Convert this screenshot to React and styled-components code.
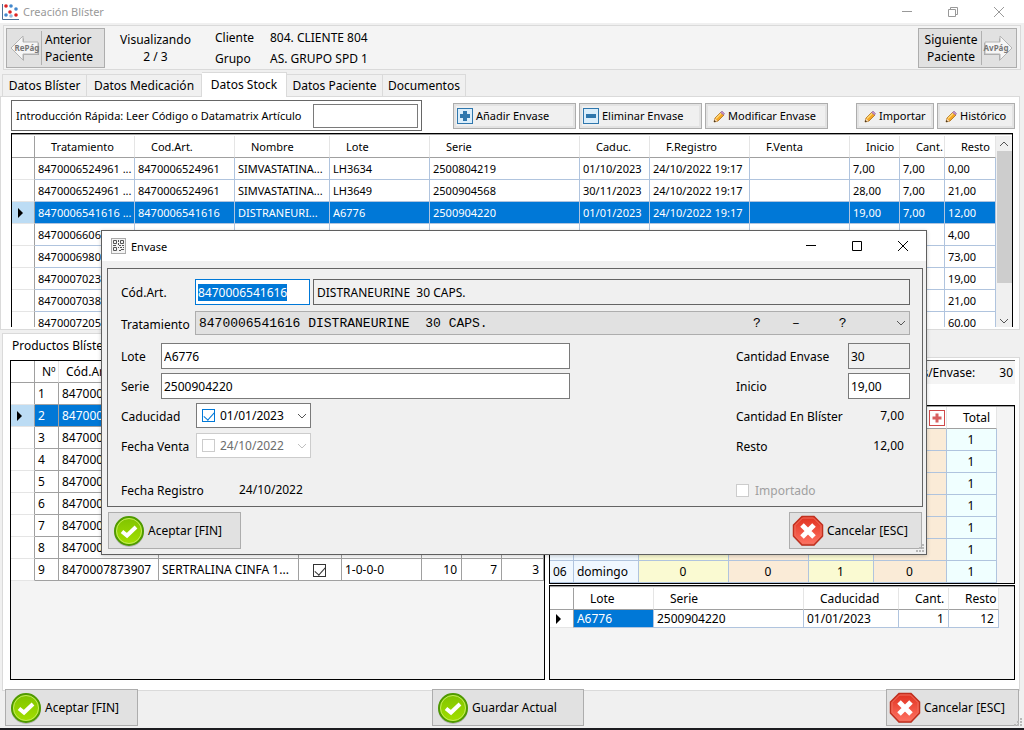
import React, { useEffect, useRef } from "react";
import styled, { createGlobalStyle, css } from "styled-components";

const stockCols = [23, 100, 100, 95, 100, 150, 70, 100, 100, 50, 45, 51];
const stockHead = [
	"Tratamiento",
	"Cod.Art.",
	"Nombre",
	"Lote",
	"Serie",
	"Caduc.",
	"F.Registro",
	"F.Venta",
	"Inicio",
	"Cant.",
	"Resto",
];
const registro = "24/10/2022 19:17";
const stock = [
	["8470006524961 ...", "8470006524961", "SIMVASTATINA...", "LH3634", "2500804219", "01/10/2023", registro, "", "7,00", "7,00", "0,00"],
	["8470006524961 ...", "8470006524961", "SIMVASTATINA...", "LH3649", "2500904568", "30/11/2023", registro, "", "28,00", "7,00", "21,00"],
	["8470006541616 ...", "8470006541616", "DISTRANEURI...", "A6776", "2500904220", "01/01/2023", registro, "", "19,00", "7,00", "12,00"],
	["8470006606010 ...", "8470006606010", "SINTROM 4 M...", "T0681", "2501090441", "01/05/2024", registro, "", "11,00", "7,00", "4,00"],
	["8470006980910 ...", "8470006980910", "", "", "", "", registro, "", "80,00", "7,00", "73,00"],
	["8470007023520 ...", "8470007023520", "", "", "", "", registro, "", "26,00", "7,00", "19,00"],
	["8470007038610 ...", "8470007038610", "", "", "", "", registro, "", "28,00", "7,00", "21,00"],
	["8470007205810 ...", "8470007205810", "", "", "", "", registro, "", "67,00", "7,00", "60,00"],
];

const productCols = [24, 24, 100, 140, 43, 80, 40, 40, 42];
const products = [
	["8470006524961", "SIMVASTATINA 2..."],
	["8470006541616", "DISTRANEURINE ..."],
	["8470006606010", "SINTROM 4 MG 2..."],
	["8470006980910", ""],
	["8470007023520", ""],
	["8470007038610", ""],
	["8470007205810", ""],
	["8470007654410", ""],
	["8470007873907", "SERTRALINA CINFA 1..."],
];

const dayCols = [24, 65, 90, 80, 65, 73, 50];
const days = [
	["31", "lunes"],
	["01", "martes"],
	["02", "miércoles"],
	["03", "jueves"],
	["04", "viernes"],
	["05", "sábado"],
	["06", "domingo"],
];

const lotCols = [24, 80, 150, 95, 50, 50];

const treatment = ("8470006541616 DISTRANEURINE  30 CAPS.".padEnd(71) + "?    –     ?").replace(/ /g, "\u00a0");

function Cols({ widths }) {
	return (
		<colgroup>
			{widths.map((w, i) => (
				<col key={i} style={{ width: w }} />
			))}
		</colgroup>
	);
}

function AcceptIcon() {
	return (
		<svg width="32" height="32" viewBox="0 0 32 32" aria-hidden="true">
			<defs>
				<linearGradient id="green" x1="0" y1="0" x2="0" y2="1">
					<stop offset="0" stopColor="#7fc300" />
					<stop offset="1" stopColor="#a3e000" />
				</linearGradient>
			</defs>
			<circle cx="16" cy="17" r="15" fill="#b9b9b9" />
			<circle cx="16" cy="16" r="14" fill="url(#green)" stroke="#4f9a00" strokeWidth="2" />
			<circle cx="16" cy="16" r="12.500" fill="none" stroke="#c4ec5c" strokeWidth="1" />
			<path d="M9 16.500 L14 20.500 L23 12" fill="none" stroke="#fff" strokeWidth="4" />
		</svg>
	);
}

function CancelIcon() {
	return (
		<svg width="32" height="32" viewBox="0 0 32 32" aria-hidden="true">
			<defs>
				<linearGradient id="red" x1="0" y1="0" x2="0" y2="1">
					<stop offset="0" stopColor="#e0301e" />
					<stop offset="1" stopColor="#ff7363" />
				</linearGradient>
			</defs>
			<path d="M10 2 H22 L31 11 V22 L22 31 H10 L1 22 V11 Z" fill="#b9b9b9" />
			<path d="M10 1.500 H22 L30.500 10 V21 L22 30 H10 L1.500 21 V10 Z" fill="url(#red)" stroke="#c0301f" strokeWidth="1.500" />
			<path d="M10.500 3 H21.500 L29 10.500 V20.500 L21.500 28.500 H10.500 L3 20.500 V10.500 Z" fill="none" stroke="#f0705f" strokeWidth="1" />
			<path d="M10 10 L22 22 M22 10 L10 22" fill="none" stroke="#fff" strokeWidth="5" />
		</svg>
	);
}

function PageArrow({ next }) {
	return (
		<svg width="30" height="28" viewBox="0 0 30 28" aria-hidden="true">
			<g transform={next ? "translate(30 0) scale(-1 1)" : undefined}>
				<path d="M2 15 L14 4 V9 H29 V21 H14 V27 Z" fill="#a8a8a8" />
				<path d="M1 14 L13 2 V8 H28 V20 H13 V26 Z" fill="#f6f6f6" stroke="#b4b4b4" />
			</g>
			<text x={next ? 13 : 17} y="17" textAnchor="middle" fontSize="8" fontWeight="700" fill="#777">
				{next ? "AvPág" : "RePág"}
			</text>
		</svg>
	);
}

function PencilIcon() {
	return (
		<svg width="12" height="14" viewBox="0 0 12 14" aria-hidden="true">
			<path d="M1 13 L2 9 L8 3 L11 6 L5 12 Z" fill="#f5a623" stroke="#a86a1a" strokeWidth="0.800" />
			<path d="M2.500 9 L8 3.500 L9 4.500 L3.500 10 Z" fill="#ffd977" />
			<path d="M7.500 3.500 L9 2 L11.500 4.500 L10.500 6 Z" fill="#c98fc8" stroke="#8d6a9a" strokeWidth="0.600" />
			<path d="M1 13 L1.500 11 L3 12.500 Z" fill="#222" />
			<path d="M1.500 11 L2 9.500 L4.500 12 L3 12.500 Z" fill="#f4d9b8" />
		</svg>
	);
}

function SignIcon({ minus }) {
	return (
		<svg width="16" height="16" viewBox="0 0 16 16" aria-hidden="true">
			<rect x="0.500" y="0.500" width="15" height="15" fill="#dbeefb" stroke="#2f77ad" />
			<rect x="3" y="6" width="10" height="4" fill="#2f77ad" />
			{!minus && <rect x="6" y="3" width="4" height="10" fill="#2f77ad" />}
		</svg>
	);
}

function AppIcon() {
	const dots = [
		[3, 2, "#d22"],
		[8, 2, "#48c"],
		[13, 5, "#48c"],
		[7, 8, "#d22"],
		[13, 11, "#d22"],
		[3, 11, "#48c"],
		[8, 12, "#9bd"],
	];
	return (
		<svg width="17" height="16" viewBox="0 0 17 16" aria-hidden="true">
			<path d="M0.500 0 V15.500 H17" fill="none" stroke="#4a6f94" />
			{dots.map(([x, y, fill]) => (
				<circle key={x + "-" + y} cx={x + 1} cy={y} r="1.800" fill={fill} />
			))}
		</svg>
	);
}

function CodeIcon() {
	return (
		<svg width="15" height="16" viewBox="0 0 15 16" aria-hidden="true">
			<rect x="0.500" y="0.500" width="14" height="15" fill="#f4f4f4" stroke="#aaa" />
			<g fill="none" stroke="#555">
				<path d="M2.500 2.500 h3 v3 h-3 z M9.500 2.500 h3 v3 h-3 z M2.500 9.500 h3 v3 h-3 z" />
				<path d="M7.500 2 v2 M7.500 5 v2 M2 7.500 h3 M8 7.500 h2 M11 7.500 h2 M7.500 9 v1 M9 9.500 h2 M10 11.500 h3 M8 12.500 h2 M12.500 9 v1" />
			</g>
		</svg>
	);
}

function Grip() {
	return (
		<GripMark width="9" height="9" viewBox="0 0 9 9" aria-hidden="true">
			<path d="M6 0h2v2h-2z M3 3h2v2h-2z M6 3h2v2h-2z M0 6h2v2h-2z M3 6h2v2h-2z M6 6h2v2h-2z" fill="#b8b8b8" />
		</GripMark>
	);
}

function Glyph({ kind }) {
	const paths = {
		min: "M1 5.500 H11",
		max: "M1.500 1.500 H10.500 V10.500 H1.500 Z",
		restore: "M1.500 3.500 H8.500 V10.500 H1.500 Z M3.500 3.500 V1.500 H10.500 V8.500 H8.500",
		close: "M1 1 L11 11 M11 1 L1 11",
		down: "M2 4 L6 8 L10 4",
		up: "M2 8 L6 4 L10 8",
	};
	return (
		<svg width="12" height="12" viewBox="0 0 12 12" aria-hidden="true">
			<path d={paths[kind]} fill="none" stroke="currentColor" />
		</svg>
	);
}

function WindowControls({ middle }) {
	return (
		<Controls>
			<ControlButton aria-label="Minimizar"><Glyph kind="min" /></ControlButton>
			<ControlButton aria-label="Maximizar"><Glyph kind={middle} /></ControlButton>
			<ControlButton aria-label="Cerrar"><Glyph kind="close" /></ControlButton>
		</Controls>
	);
}

function StockGrid() {
	return (
		<StockFrame>
			<Grid>
				<Cols widths={stockCols} />
				<thead>
					<tr>
						<HeadCell />
						{stockHead.map(h => <HeadCell key={h}>{h}</HeadCell>)}
					</tr>
				</thead>
				<tbody>
					{stock.map((row, r) => (
						<tr key={r}>
							<MarkCell $on={r === 2}>{r === 2 && <Marker />}</MarkCell>
							{row.map((value, c) => (
								<Cell key={c} $on={r === 2}>{value}</Cell>
							))}
						</tr>
					))}
				</tbody>
			</Grid>
			<ScrollBar>
				<Glyph kind="up" />
				<Thumb />
				<Glyph kind="down" />
			</ScrollBar>
		</StockFrame>
	);
}

function ProductGrid() {
	return (
		<ProductFrame>
			<Grid $big>
				<Cols widths={productCols} />
				<thead>
					<tr>
						<HeadCell />
						{["Nº", "Cód.Art.", "Nombre", "", "Pauta", "", "", ""].map((h, i) => (
							<HeadCell key={i} $tight>{h}</HeadCell>
						))}
					</tr>
				</thead>
				<tbody>
					{products.map(([code, name], r) => (
						<tr key={r}>
							<MarkCell $on={r === 1}>{r === 1 && <Marker />}</MarkCell>
							<Cell $dark $on={r === 1}>{r + 1}</Cell>
							<Cell $dark $on={r === 1}>{code}</Cell>
							<Cell $dark $on={r === 1}>{name}</Cell>
							<Cell $dark $on={r === 1} $align="center">
								<Check type="checkbox" aria-label={"Producto " + (r + 1)} defaultChecked />
							</Cell>
							<Cell $dark $on={r === 1}>1-0-0-0</Cell>
							<Cell $dark $on={r === 1} $align="right">10</Cell>
							<Cell $dark $on={r === 1} $align="right">7</Cell>
							<Cell $dark $on={r === 1} $align="right">3</Cell>
						</tr>
					))}
				</tbody>
			</Grid>
		</ProductFrame>
	);
}

function DayGrid() {
	return (
		<DayFrame>
			<Grid $big>
				<Cols widths={dayCols} />
				<thead>
					<tr>
						<HeadCell />
						<HeadCell />
						<HeadCell />
						<HeadCell />
						<HeadCell />
						<HeadCell $align="right">
							<svg width="16" height="16" viewBox="0 0 16 16" aria-hidden="true">
								<rect x="0.500" y="0.500" width="15" height="15" fill="#fff" stroke="#d04a4a" />
								<path d="M8 3.500 V12.500 M3.500 8 H12.500" stroke="#d86060" strokeWidth="3" />
							</svg>
						</HeadCell>
						<HeadCell>Total</HeadCell>
					</tr>
				</thead>
				<tbody>
					{days.map(([num, name]) => (
						<tr key={num}>
							<Cell $tone="#f0f8ff">{num}</Cell>
							<Cell $tone="#f0f8ff">{name}</Cell>
							<Cell $tone="#fafad2" $align="center">0</Cell>
							<Cell $tone="#faebd7" $align="center">0</Cell>
							<Cell $tone="#fafad2" $align="center">1</Cell>
							<Cell $tone="#faebd7" $align="center">0</Cell>
							<Cell $tone="#f0ffff" $align="center">1</Cell>
						</tr>
					))}
				</tbody>
			</Grid>
		</DayFrame>
	);
}

function LotGrid() {
	return (
		<LotFrame>
			<Grid $big>
				<Cols widths={lotCols} />
				<thead>
					<tr>
						<HeadCell />
						{["Lote", "Serie", "Caducidad", "Cant.", "Resto"].map(h => <HeadCell key={h}>{h}</HeadCell>)}
					</tr>
				</thead>
				<tbody>
					<tr>
						<MarkCell $short><Marker /></MarkCell>
						<Cell $short $on>A6776</Cell>
						<Cell $short>2500904220</Cell>
						<Cell $short>01/01/2023</Cell>
						<Cell $short $align="right">1</Cell>
						<Cell $short $align="right">12</Cell>
					</tr>
				</tbody>
			</Grid>
		</LotFrame>
	);
}

function EnvaseDialog() {
	const codeRef = useRef(null);

	useEffect(() => {
		codeRef.current.focus();
		codeRef.current.select();
	}, []);

	return (
		<Dialog role="dialog" aria-labelledby="envase-title">
			<DialogTitle>
				<CodeIcon />
				<span id="envase-title">Envase</span>
				<WindowControls middle="max" />
			</DialogTitle>
			<Form>
				<FormRow $height={32}>
					<Label htmlFor="codigo" $width={74}>Cód.Art.</Label>
					<TextBox id="codigo" ref={codeRef} $width={115} $active defaultValue="8470006541616" />
					<ReadOnly aria-label="Artículo" readOnly value="DISTRANEURINE  30 CAPS." />
				</FormRow>
				<FormRow $height={32}>
					<Label htmlFor="tratamiento" $width={74}>Tratamiento</Label>
					<SelectWrap>
						<Select id="tratamiento" disabled>
							<option>{treatment}</option>
						</Select>
						<Glyph kind="down" />
					</SelectWrap>
				</FormRow>
				<Columns>
					<Left>
						<FormRow>
							<Label htmlFor="lote" $width={40}>Lote</Label>
							<TextBox id="lote" defaultValue="A6776" />
						</FormRow>
						<FormRow>
							<Label htmlFor="serie" $width={40}>Serie</Label>
							<TextBox id="serie" defaultValue="2500904220" />
						</FormRow>
						<FormRow>
							<Label htmlFor="caducidad" $width={75}>Caducidad</Label>
							<DateBox>
								<Check type="checkbox" $blue aria-label="Usar caducidad" defaultChecked />
								<input id="caducidad" defaultValue="01/01/2023" />
								<button aria-label="Abrir calendario"><Glyph kind="down" /></button>
							</DateBox>
						</FormRow>
						<FormRow $height={44}>
							<Label htmlFor="venta" $width={75}>Fecha Venta</Label>
							<DateBox $off>
								<Check type="checkbox" $off aria-label="Usar fecha de venta" disabled />
								<input id="venta" defaultValue="24/10/2022" disabled />
								<button aria-label="Abrir calendario" disabled><Glyph kind="down" /></button>
							</DateBox>
						</FormRow>
						<FormRow>
							<Label as="span" $width={118}>Fecha Registro</Label>
							<Value>24/10/2022</Value>
						</FormRow>
					</Left>
					<Right>
						<FormRow>
							<Label htmlFor="cantidad" $width={112}>Cantidad Envase</Label>
							<TextBox id="cantidad" readOnly $grey value="30" />
						</FormRow>
						<FormRow>
							<Label htmlFor="inicio" $width={112}>Inicio</Label>
							<TextBox id="inicio" defaultValue="19,00" />
						</FormRow>
						<FormRow>
							<Label as="span">Cantidad En Blíster</Label>
							<Value $end>7,00</Value>
						</FormRow>
						<FormRow $height={44}>
							<Label as="span">Resto</Label>
							<Value $end>12,00</Value>
						</FormRow>
						<CheckLabel>
							<Check type="checkbox" $off disabled />
							Importado
						</CheckLabel>
					</Right>
				</Columns>
			</Form>
			<DialogFooter>
				<ActionButton><AcceptIcon />Aceptar [FIN]</ActionButton>
				<ActionButton $cancel><CancelIcon />Cancelar [ESC]</ActionButton>
			</DialogFooter>
			<Grip />
		</Dialog>
	);
}

export default function App() {
	return (
		<Window>
			<GlobalStyle />
			<TitleBar>
				<AppIcon />
				<span>Creación Blíster</span>
				<WindowControls middle="restore" />
			</TitleBar>

			<PatientBar>
				<PageButton>
					<PageArrow />
					<span>Anterior<br />Paciente</span>
				</PageButton>
				<Viewing>Visualizando<br />2 / 3</Viewing>
				<Client>
					<dt>Cliente</dt>
					<dd>804. CLIENTE 804</dd>
					<dt>Grupo</dt>
					<dd>AS. GRUPO SPD 1</dd>
				</Client>
				<PageButton $next>
					<span>Siguiente<br />Paciente</span>
					<PageArrow next />
				</PageButton>
			</PatientBar>

			<Tabs role="tablist">
				<Tab role="tab" $width={85}>Datos Blíster</Tab>
				<Tab role="tab" $width={115}>Datos Medicación</Tab>
				<Tab role="tab" $width={85} $active aria-selected="true">Datos Stock</Tab>
				<Tab role="tab" $width={96}>Datos Paciente</Tab>
				<Tab role="tab" $width={83}>Documentos</Tab>
			</Tabs>
			<StockPage>
				<Toolbar>
					<QuickEntry>
						<label htmlFor="rapida">Introducción Rápida: Leer Código o Datamatrix Artículo</label>
						<input id="rapida" />
					</QuickEntry>
					<ToolButton><SignIcon />Añadir Envase</ToolButton>
					<ToolButton><SignIcon minus />Eliminar Envase</ToolButton>
					<ToolButton $pencil><PencilIcon />Modificar Envase</ToolButton>
					<ToolButton $pencil $small $push><PencilIcon />Importar</ToolButton>
					<ToolButton $pencil $small><PencilIcon />Histórico</ToolButton>
				</Toolbar>
				<StockGrid />
			</StockPage>

			<LowerTabs role="tablist">
				<Tab role="tab" $width={116} $active aria-selected="true">Productos Blíster</Tab>
			</LowerTabs>
			<LowerPage>
				<ProductGrid />
				<RightColumn>
					<Summary>
						<span>Unidades/Envase:</span>
						<span>30</span>
					</Summary>
					<DayGrid />
					<LotGrid />
				</RightColumn>
			</LowerPage>

			<Footer>
				<ActionButton><AcceptIcon />Aceptar [FIN]</ActionButton>
				<ActionButton $wide><AcceptIcon />Guardar Actual</ActionButton>
				<ActionButton $cancel><CancelIcon />Cancelar [ESC]</ActionButton>
			</Footer>
			<Grip />

			<EnvaseDialog />
		</Window>
	);
}

const GlobalStyle = createGlobalStyle`
	* {
		box-sizing: border-box;
	}
	body {
		margin: 0;
		background: #f0f0f0;
	}
	body, button, input, select {
		font-family: "Noto Sans", "Open Sans", sans-serif;
		font-size: 12px;
		color: #000;
	}
	::selection {
		background: #0078d7;
		color: #fff;
	}
`;

const Window = styled.main`
	position: relative;
	display: flex;
	flex-direction: column;
	min-height: 100vh;
	overflow: hidden;
	background: #f0f0f0;
	border-bottom: 2px solid #1c1c20;
`;

const GripMark = styled.svg`
	position: absolute;
	right: 1px;
	bottom: 1px;
`;

// TITLE BARS
const TitleBar = styled.header`
	display: flex;
	align-items: center;
	gap: 4px;
	height: 23px;
	padding: 0 2px;
	background: #fff;
	color: #999;
	font-size: 11px;
`;

const Controls = styled.div`
	display: flex;
	margin-left: auto;
	align-self: stretch;
`;

const ControlButton = styled.button`
	display: flex;
	align-items: center;
	justify-content: center;
	width: 46px;
	padding: 0;
	border: 0;
	background: none;
	color: inherit;
`;

// PATIENT BAR
const PatientBar = styled.section`
	display: flex;
	align-items: center;
	height: 45px;
	margin: 2px 3px 2px;
	padding: 0 3px 0 2px;
	border: 1px solid #dadada;
	background: #f4f4f4;
`;

const PageButton = styled.button`
	display: flex;
	align-items: center;
	justify-content: space-between;
	width: 99px;
	height: 40px;
	padding: 0 3px;
	border: 1px solid #adadad;
	background: #e1e1e1;
	margin-left: ${p => (p.$next ? "auto" : "0")};
	line-height: 17px;

	span {
		flex: 1;
		padding: ${p => (p.$next ? "0 2px 0 0" : "0 0 0 3px")};
		margin: 0 1px;
		text-align: ${p => (p.$next ? "center" : "left")};
		border: 0 solid #b0b0b0;
		border-width: ${p => (p.$next ? "0 1px 0 0" : "0 0 0 1px")};
	}
`;

const Viewing = styled.p`
	width: 101px;
	margin: 0;
	text-align: center;
	line-height: 17px;
`;

const Client = styled.dl`
	display: grid;
	grid-template-columns: 55px auto;
	margin: 0 0 0 9px;
	line-height: 21px;

	dd {
		margin: 0;
	}
`;

// TABS
const Tabs = styled.nav`
	display: flex;
	align-items: flex-end;
	height: 24px;
	padding-left: 2px;
`;

const LowerTabs = styled(Tabs)`
	margin-top: 3px;
`;

const Tab = styled.button`
	width: ${p => p.$width}px;
	height: 22px;
	padding: 0;
	border: 1px solid #dadada;
	border-left-width: 0;
	border-bottom: 0;
	background: #f0f0f0;
	white-space: nowrap;

	&:first-child {
		border-left-width: 1px;
	}
	${p =>
		p.$active &&
		css`
			z-index: 1;
			height: 25px;
			margin-bottom: -1px;
			padding-bottom: 2px;
			background: #fff;
		`}
`;

const StockPage = styled.section`
	margin-right: 4px;
	padding: 3px 4px 2px 10px;
	border: 1px solid #dadada;
	background: #fff;
`;

const Toolbar = styled.div`
	display: flex;
	align-items: center;
	gap: 3px;
	height: 31px;
	margin-bottom: 2px;
`;

const QuickEntry = styled.div`
	display: flex;
	align-items: center;
	justify-content: space-between;
	width: 411px;
	height: 31px;
	margin-right: 28px;
	padding: 0 3px 0 4px;
	border: 1px solid #666;
	white-space: nowrap;
	font-size: 11px;

	input {
		width: 105px;
		height: 24px;
		border: 1px solid #7a7a7a;
	}
`;

const ToolButton = styled.button`
	display: flex;
	align-items: center;
	gap: 3px;
	width: ${p => (p.$small ? 78 : 123)}px;
	height: 26px;
	padding: 0 0 0 ${p => (p.$pencil ? 7 : 3)}px;
	margin-left: ${p => (p.$push ? "auto" : "0")};
	border: 1px solid #adadad;
	box-shadow: inset 0 0 0 2px #e3e3e3;
	background: #f0f0f0;
	white-space: nowrap;
	font-size: 11px;
`;

// DATA GRIDS
const Frame = styled.div`
	border: 1px solid #000;
	background: #f4f4f4;
	box-shadow: inset 0 1px #a0a0a0;
	overflow: hidden;
`;

const StockFrame = styled(Frame)`
	display: flex;
	justify-content: space-between;
	height: 194px;
	margin-right: 2px;
	padding-top: 2px;
	border-bottom: 0;
	background: #fff;
`;

const ProductFrame = styled(Frame)`
	flex: 534 1 0;
`;

const DayFrame = styled(Frame)`
	height: 179px;
	margin-bottom: 1px;
	padding-top: 1px;
`;

const LotFrame = styled(Frame)`
	flex: 1;
	padding-top: 2px;
`;

const Grid = styled.table`
	width: 1px;
	table-layout: fixed;
	border-collapse: separate;
	border-spacing: 0;
	background: #fff;
	font-size: ${p => (p.$big ? 12 : 11)}px;
`;

const HeadCell = styled.th`
	height: 22px;
	padding: ${p => (p.$align ? "0 1px" : p.$tight ? "0 0 0 7px" : "0 0 0 16px")};
	border-right: 1px solid #e5e5e5;
	border-bottom: 1px solid #a0a0a0;
	background: #fff;
	font-weight: 400;
	text-align: ${p => p.$align || "left"};
	white-space: nowrap;
	overflow: hidden;

	&:first-child {
		border-right-color: #a0a0a0;
	}
	svg {
		display: block;
		margin-left: auto;
	}
`;

const Cell = styled.td`
	height: ${p => (p.$short ? 18 : 22)}px;
	padding: 0 4px 0 3px;
	border-right: 1px solid ${p => (p.$dark ? "#a0a0a0" : "#b0c4de")};
	border-bottom: 1px solid ${p => (p.$dark ? "#a0a0a0" : "#b0c4de")};
	background: ${p => (p.$on ? "#0078d7" : p.$tone || "#fff")};
	color: ${p => (p.$on ? "#fff" : "#000")};
	text-align: ${p => p.$align || "left"};
	white-space: nowrap;
	overflow: hidden;
`;

const MarkCell = styled.td`
	height: ${p => (p.$short ? 18 : 22)}px;
	padding: 0 0 0 6px;
	border-right: 1px solid #a0a0a0;
	border-bottom: 1px solid #e5e5e5;
	background: ${p => (p.$on ? "#bcdcf4" : "#fff")};
`;

const Marker = styled.span`
	display: block;
	border: 5px solid transparent;
	border-left-color: #000;
	border-right-width: 0;
	width: 0;
`;

const ScrollBar = styled.div`
	display: flex;
	flex-direction: column;
	align-items: center;
	width: 16px;
	padding-top: 2px;
	background: #f0f0f0;
	color: #555;

	svg:last-child {
		margin-top: auto;
	}
`;

const Thumb = styled.div`
	width: 15px;
	height: 132px;
	margin-top: 1px;
	background: #cdcdcd;
`;

const LowerPage = styled.section`
	display: flex;
	flex: 1;
	gap: 4px;
	margin: 0 4px 0 2px;
	padding: 2px 4px 10px 7px;
	border: 1px solid #dadada;
	background: #fff;
`;

const RightColumn = styled.div`
	display: flex;
	flex: 467 1 0;
	flex-direction: column;
`;

const Summary = styled.div`
	display: flex;
	justify-content: flex-end;
	gap: 24px;
	height: 24px;
	margin-bottom: 21px;
	padding-right: 2px;
	border-top: 1px solid #666;
	background: #f4f4f4;
	line-height: 24px;
`;

// FOOTER
const Footer = styled.footer`
	display: flex;
	justify-content: space-between;
	margin-top: -2px;
	padding: 0 5px 2px;
`;

const ActionButton = styled.button`
	display: flex;
	align-items: center;
	gap: 3px;
	width: ${p => (p.$wide ? 152 : 133)}px;
	height: 37px;
	margin-right: ${p => (p.$wide ? 8 : 0)}px;
	padding: 0 ${p => (p.$cancel ? 2 : 4)}px;
	border: 1px solid #adadad;
	background: #e1e1e1;
	white-space: nowrap;

	svg {
		flex: none;
	}
`;

// ENVASE DIALOG
const Dialog = styled.section`
	position: absolute;
	z-index: 2;
	top: 230px;
	left: 101px;
	right: 97px;
	border: 1px solid #5f5f5f;
	background: #f0f0f0;
	box-shadow: 0 1px 4px rgba(0, 0, 0, 0.2);
`;

const DialogTitle = styled.header`
	display: flex;
	align-items: center;
	gap: 5px;
	height: 30px;
	padding-left: 9px;
	background: #fff;
	font-size: 11px;
`;

const Form = styled.div`
	height: 239px;
	margin: 7px 3px 5px 5px;
	padding: 10px 12px 0 13px;
	border: 1px solid #646464;
`;

const FormRow = styled.div`
	display: flex;
	align-items: flex-start;
	height: ${p => p.$height || 30}px;
`;

const Label = styled.label`
	flex: none;
	width: ${p => (p.$width ? p.$width + "px" : "auto")};
	line-height: 28px;
	white-space: nowrap;
`;

const TextBox = styled.input`
	flex: ${p => (p.$width ? "none" : "1")};
	width: ${p => (p.$width ? p.$width + "px" : "0")};
	height: 26px;
	padding: 0 2px;
	border: 1px solid ${p => (p.$active ? "#0078d7" : "#7a7a7a")};
	background: ${p => (p.$grey ? "#f0f0f0" : "#fff")};
	outline: 0;
`;

const ReadOnly = styled.input`
	flex: 1;
	height: 26px;
	margin-left: 3px;
	padding: 0 3px;
	border: 1px solid #646464;
	background: #f0f0f0;
	white-space: pre;
`;

const SelectWrap = styled.div`
	display: flex;
	flex: 1;
	align-items: center;
	height: 24px;
	padding-right: 2px;
	border: 1px solid #adadad;
	background: #e1e1e1;
	color: #555;
`;

const Select = styled.select`
	flex: 1;
	appearance: none;
	padding: 0 3px;
	border: 0;
	background: none;
	font-family: "Liberation Mono", monospace;
	font-size: 13px;
	color: #000;
	opacity: 1;
`;

const Columns = styled.div`
	display: flex;
	justify-content: space-between;
`;

const Left = styled.div`
	flex: 0 1 449px;
`;

const Right = styled.div`
	flex: 0 0 174px;
`;

const DateBox = styled.div`
	display: flex;
	align-items: center;
	width: 115px;
	height: 25px;
	padding: 0 2px 0 5px;
	border: 1px solid ${p => (p.$off ? "#ccc" : "#7a7a7a")};
	background: #fff;

	input[id] {
		flex: 1;
		width: 0;
		padding: 0 0 0 5px;
		border: 0;
		background: none;
		color: ${p => (p.$off ? "#6d6d6d" : "#000")};
	}
	button {
		display: flex;
		padding: 0;
		border: 0;
		background: none;
		color: ${p => (p.$off ? "#bfbfbf" : "#555")};
	}
`;

const Check = styled.input`
	appearance: none;
	flex: none;
	display: inline-flex;
	justify-content: center;
	width: 13px;
	height: 13px;
	margin: 0;
	vertical-align: middle;
	border: 1px solid ${p => (p.$off ? "#ccc" : p.$blue ? "#0078d7" : "#333")};
	background: #fff;
	color: ${p => (p.$blue ? "#0078d7" : "#333")};

	&:checked::before {
		content: "";
		width: 5px;
		height: 9px;
		border: solid currentColor;
		border-width: 0 1px 1px 0;
		transform: rotate(42deg);
	}
`;

const CheckLabel = styled.label`
	display: flex;
	align-items: center;
	gap: 6px;
	height: 26px;
	color: #a0a0a0;
`;

const Value = styled.span`
	margin-left: ${p => (p.$end ? "auto" : "0")};
	padding-right: ${p => (p.$end ? 6 : 0)}px;
	line-height: 26px;
`;

const DialogFooter = styled.footer`
	display: flex;
	justify-content: space-between;
	padding: 0 4px 5px 6px;
`;
